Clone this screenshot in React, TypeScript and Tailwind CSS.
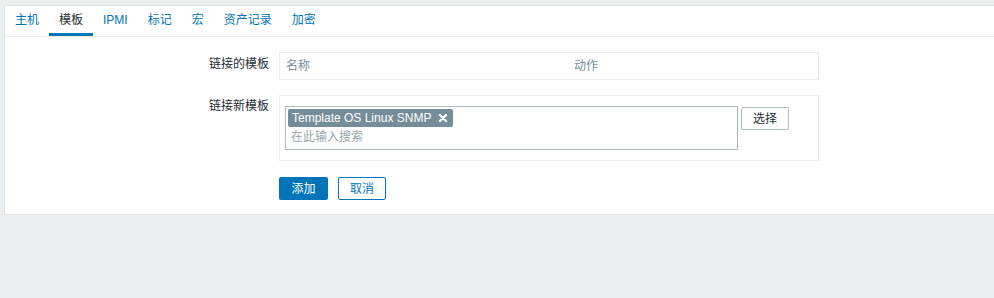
import React from 'react';

const tabs = ['主机', '模板', 'IPMI', '标记', '宏', '资产记录', '加密'];

export default function App() {
  const font = { fontFamily: '"Liberation Sans", Arial, "Noto Sans CJK SC", sans-serif' };

  return (
    <div className="h-[298px] w-[994px] bg-[#ebeef0] pt-[5px] pl-[4px] overflow-hidden text-[12px] text-[#1f2c33]" style={font}>
      <div className="h-[210px] bg-white border border-r-0 border-[#dfe4e7]">
        {/* Tabs */}
        <div className="flex h-[31px] border-b border-[#ebeef0]">
          {tabs.map((t, i) => (
            <div
              key={t}
              className={
                i === 1
                  ? 'flex items-center px-[10px] border-b-[3px] border-[#0275b8] text-[#1f2c33]'
                  : 'flex items-center px-[10px] border-b-[3px] border-transparent text-[#0275b8]'
              }
            >
              {t}
            </div>
          ))}
        </div>

        {/* Form */}
        <div className="pt-[15px]">
          {/* Linked templates */}
          <div className="flex">
            <div className="w-[274px] pr-[10px] text-right pt-[5px] leading-[14px]">链接的模板</div>
            <div className="w-[540px] h-[28px] border border-[#ebeef0] flex items-center text-[#768d99]">
              <div className="w-[294px] pl-[6px]">名称</div>
              <div>动作</div>
            </div>
          </div>

          {/* Link new templates */}
          <div className="flex mt-[15px]">
            <div className="w-[274px] pr-[10px] text-right pt-[4px] leading-[14px]">链接新模板</div>
            <div className="w-[540px] h-[66px] border border-[#ebeef0] px-[5px] pt-[10px]">
              <div className="flex items-start gap-[3px]">
                <div className="w-[453px] h-[44px] border border-[#acbbc2] pl-[2px] pt-[2px]">
                  <div className="inline-flex items-center h-[18px] bg-[#768d99] text-white rounded-[2px] pl-[4px] pr-[5px] gap-[7px] text-[12px]">
                    <span>Template OS Linux SNMP</span>
                    <svg width="10" height="10" viewBox="0 0 10 10">
                      <path d="M2 2 L8 8 M8 2 L2 8" stroke="white" strokeWidth="2.4" strokeLinecap="round" />
                    </svg>
                  </div>
                  <div className="pl-[3px] pt-[2px] text-[#98a6ad] leading-[16px]">在此输入搜索</div>
                </div>
                <button className="mt-[1px] w-[48px] h-[23px] border border-[#acbbc2] rounded-[2px] bg-white text-[#1f2c33] text-[12px]">
                  选择
                </button>
              </div>
            </div>
          </div>

          {/* Buttons */}
          <div className="flex mt-[16px] pl-[274px] gap-[10px]">
            <button className="w-[49px] h-[23px] bg-[#0275b8] text-white rounded-[2px] text-[12px]">添加</button>
            <button className="w-[48px] h-[23px] bg-white border border-[#0275b8] text-[#0275b8] rounded-[2px] text-[12px]">取消</button>
          </div>
        </div>
      </div>
    </div>
  );
}
